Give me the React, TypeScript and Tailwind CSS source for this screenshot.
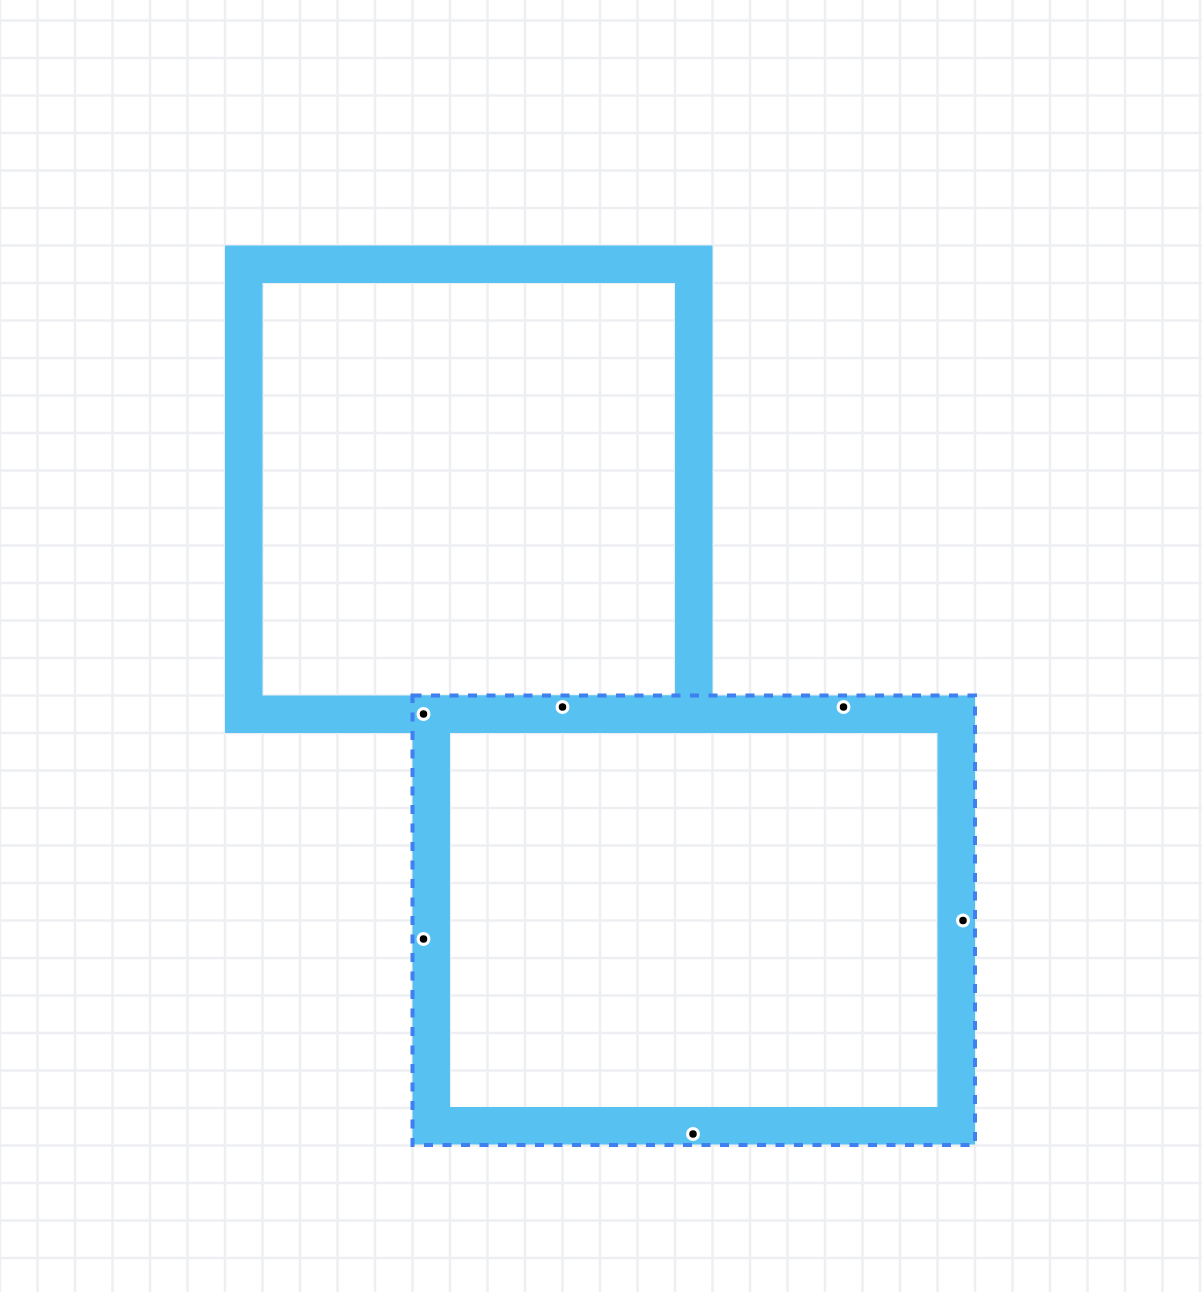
import React from "react";

const CELL = 37.5;
const GRID_Y0 = 20.5;
const W = 1202;
const H = 1292;

const BLUE = "#57C1F2";

// selection handles on the second rect (canvas coords)
const HANDLES: { x: number; y: number }[] = [
  { x: 423.5, y: 714 },
  { x: 562.5, y: 707 },
  { x: 843.5, y: 707 },
  { x: 423.5, y: 939 },
  { x: 963, y: 920.5 },
  { x: 693, y: 1134 },
];

function Grid() {
  const cols = Array.from({ length: Math.ceil(W / CELL) + 1 }, (_, i) => i * CELL);
  const rows = Array.from({ length: Math.ceil(H / CELL) + 1 }, (_, i) => GRID_Y0 + i * CELL);
  return (
    <g stroke="#eeeff2" strokeWidth={2.5}>
      {cols.map((x) => (
        <line key={`v${x}`} x1={x} y1={0} x2={x} y2={H} />
      ))}
      {rows.map((y) => (
        <line key={`h${y}`} x1={0} y1={y} x2={W} y2={y} />
      ))}
    </g>
  );
}

export default function App() {
  return (
    <div className="w-full h-[1292px] bg-white overflow-hidden">
      <svg width={W} height={H} viewBox={`0 0 ${W} ${H}`} className="block">
        <Grid />

        {/* first square */}
        <rect x={243.75} y={264.25} width={450} height={450} fill="none" stroke={BLUE} strokeWidth={37.5} />

        {/* second rect (selected) */}
        <rect x={431.25} y={714.25} width={525} height={411.5} fill="none" stroke={BLUE} strokeWidth={37.5} />

        {/* selection outline */}
        <rect
          x={412.5}
          y={695.5}
          width={562.5}
          height={449.5}
          fill="none"
          stroke="#3f7ff0"
          strokeWidth={4}
          strokeDasharray="9 9.5"
        />

        {HANDLES.map((h, i) => (
          <g key={i}>
            <circle cx={h.x} cy={h.y} r={7} fill="#ffffff" />
            <circle cx={h.x} cy={h.y} r={3.75} fill="#000000" />
          </g>
        ))}
      </svg>
    </div>
  );
}
